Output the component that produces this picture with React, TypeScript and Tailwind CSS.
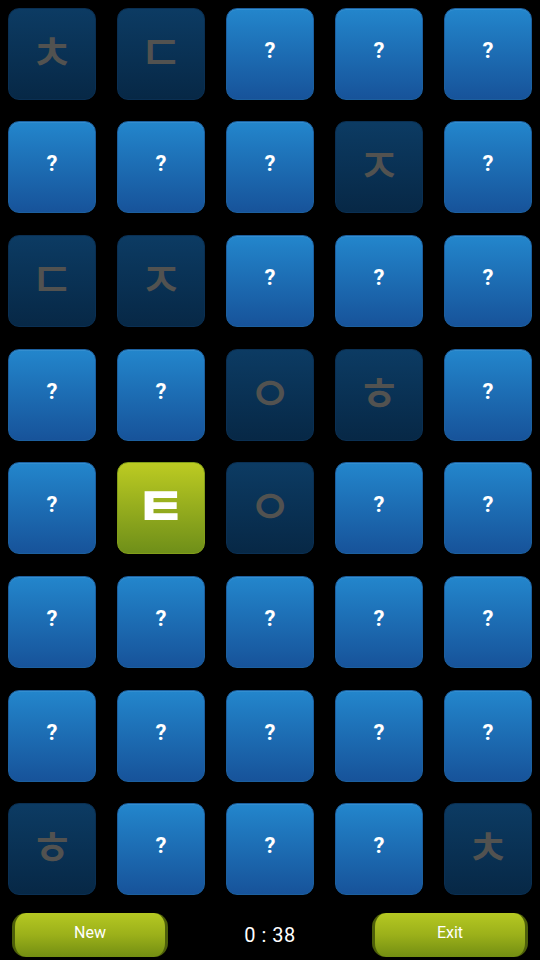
import React from "react";

type Cell = { k: "q" } | { k: "d"; t: string } | { k: "y"; t: string };

const q: Cell = { k: "q" };
const d = (t: string): Cell => ({ k: "d", t });
const y = (t: string): Cell => ({ k: "y", t });

const rows: Cell[][] = [
  [d("ㅊ"), d("ㄷ"), q, q, q],
  [q, q, q, d("ㅈ"), q],
  [d("ㄷ"), d("ㅈ"), q, q, q],
  [q, q, d("ㅇ"), d("ㅎ"), q],
  [q, y("ㅌ"), d("ㅇ"), q, q],
  [q, q, q, q, q],
  [q, q, q, q, q],
  [d("ㅎ"), q, q, q, d("ㅊ")],
];

const ko = { fontFamily: '"Noto Sans CJK KR", "Noto Sans", sans-serif' };

function Tile({ c }: { c: Cell }) {
  if (c.k === "q") {
    return (
      <div className="h-[92px] rounded-[11px] bg-gradient-to-b from-[#2386cc] to-[#17539a] border border-[#1c5f9e] flex items-center justify-center shadow-[inset_0_1px_0_rgba(255,255,255,0.08)]">
        <span className="text-white text-[22px] font-bold -mt-[7px]" style={{ fontFamily: "Roboto, sans-serif" }}>?</span>
      </div>
    );
  }
  if (c.k === "d") {
    return (
      <div className="h-[92px] rounded-[11px] bg-gradient-to-b from-[#0c3b63] to-[#072846] border border-[#0a2f52] flex items-center justify-center">
        <span className="text-[#525250] text-[48px] font-medium leading-none -mt-[10px]" style={ko}>{c.t}</span>
      </div>
    );
  }
  return (
    <div className="h-[92px] rounded-[11px] bg-gradient-to-b from-[#bccb22] to-[#6f8f19] border border-[#829e1a] flex items-center justify-center">
      <span className="text-white text-[54px] font-black leading-none -mt-[8px]" style={ko}>{c.t}</span>
    </div>
  );
}

function GreenButton({ label }: { label: string }) {
  return (
    <div className="w-[156px] h-[44px] rounded-[14px] bg-gradient-to-b from-[#b5c822] via-[#9bb01a] to-[#738e12] border-x-[3px] border-[#4d5f0a] flex items-center justify-center">
      <span className="text-white text-[16px] -mt-[4px]" style={{ fontFamily: "Roboto, sans-serif" }}>{label}</span>
    </div>
  );
}

export default function App() {
  return (
    <div className="w-[540px] h-[960px] bg-black overflow-hidden flex flex-col">
      <div className="grid grid-cols-5 gap-x-[21px] gap-y-[21.7px] px-[8px] pt-[7.5px]">
        {rows.flat().map((c, i) => (
          <Tile key={i} c={c} />
        ))}
      </div>
      <div className="flex items-center justify-between px-[12px] mt-[18px]">
        <GreenButton label="New" />
        <span className="text-white text-[20px] tracking-[0.5px]" style={{ fontFamily: "Roboto, sans-serif" }}>0 : 38</span>
        <GreenButton label="Exit" />
      </div>
    </div>
  );
}
